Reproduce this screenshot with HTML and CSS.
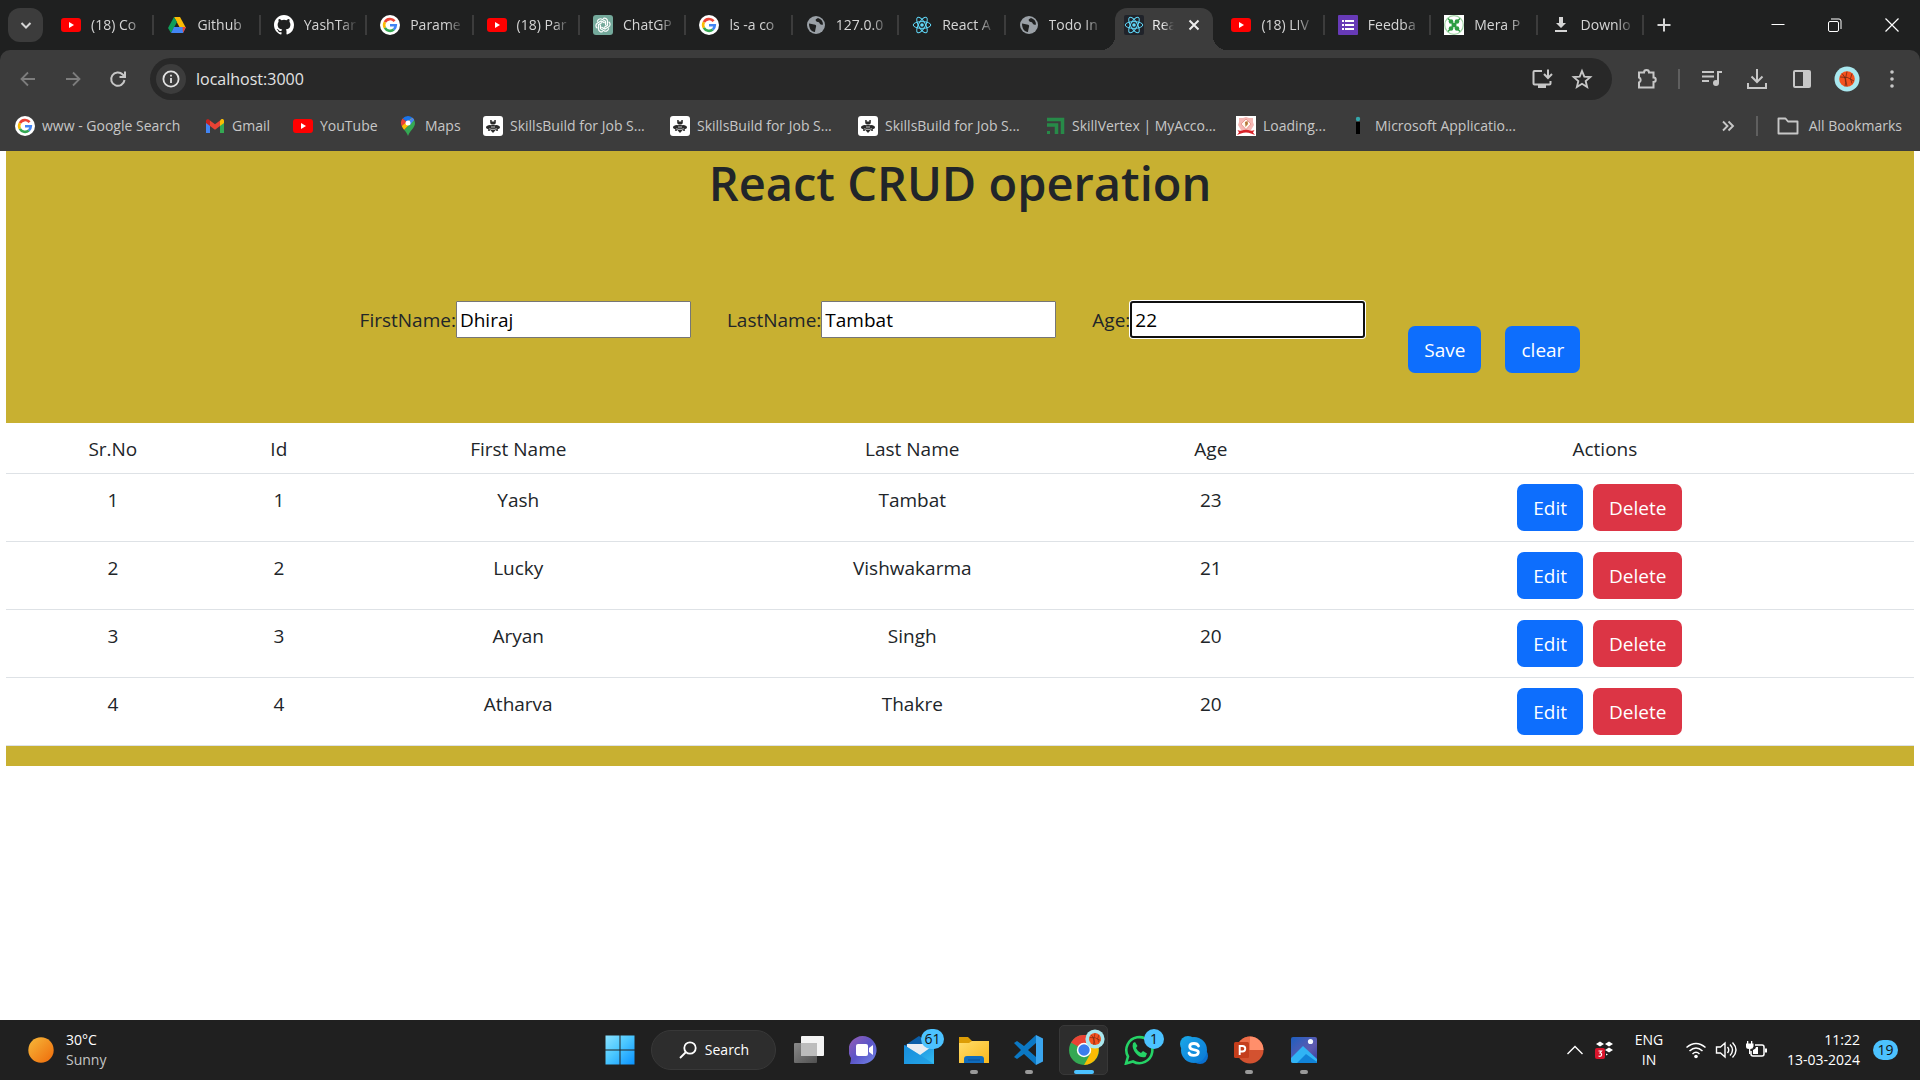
FILE: index.html
```html
<!DOCTYPE html>
<html lang="en">
<head>
<meta charset="utf-8">
<meta name="viewport" content="width=device-width, initial-scale=1">
<title>React App</title>
<link rel="stylesheet" href="styles.css">
</head>
<body>
<svg class="sprite" aria-hidden="true">
  <defs>
    <linearGradient id="g-win" x1="0" y1="0" x2="1" y2="1"><stop offset="0" stop-color="#8be2ff"/><stop offset=".45" stop-color="#4cc8ff"/><stop offset="1" stop-color="#0a93ff"/></linearGradient>
    <linearGradient id="g-sun" x1="0" y1="0" x2="1" y2="1"><stop offset="0" stop-color="#f6b93a"/><stop offset="1" stop-color="#ef6a0a"/></linearGradient>
    <linearGradient id="g-chat" x1="0" y1="0" x2="1" y2="1"><stop offset="0" stop-color="#9a5fb4"/><stop offset=".5" stop-color="#5b55c8"/><stop offset="1" stop-color="#7387e8"/></linearGradient>
    <linearGradient id="g-folder" x1="0" y1="0" x2="1" y2="1"><stop offset="0" stop-color="#ffdc6a"/><stop offset="1" stop-color="#f9b81c"/></linearGradient>
    <linearGradient id="g-skype" x1="0" y1="0" x2="1" y2="1"><stop offset="0" stop-color="#1ba5e8"/><stop offset="1" stop-color="#0a78d4"/></linearGradient>
    <linearGradient id="g-photo" x1="0" y1="0" x2="1" y2="1"><stop offset="0" stop-color="#1d5fc0"/><stop offset=".6" stop-color="#5f5ab0"/><stop offset="1" stop-color="#2d3fa0"/></linearGradient>
    <linearGradient id="g-mail" x1="0" y1="0" x2="1" y2="1"><stop offset="0" stop-color="#1384d8"/><stop offset="1" stop-color="#35bdf2"/></linearGradient>
    <linearGradient id="g-grey" x1="0" y1="0" x2="1" y2="1"><stop offset="0" stop-color="#8a8a8a"/><stop offset="1" stop-color="#505050"/></linearGradient>
  </defs>
  <symbol id="youtube" viewBox="0 0 20 20"><rect y="3" width="20" height="14" rx="3" fill="#f00"/><path d="M8 7l5 3-5 3z" fill="#fff"/></symbol>
  <symbol id="drive" viewBox="0 0 20 20"><path d="M7 2h6l6 11h-6z" fill="#fbbc04"/><path d="M7 2l3 5-6 11-3-5z" fill="#0f9d58"/><path d="M4 18l3-6h12l-3 6z" fill="#4285f4"/><path d="M15.500 12H19l-3 6z" fill="#ea4335"/></symbol>
  <symbol id="github" viewBox="0 0 16 16"><path fill="#fff" d="M8 0C3.580 0 0 3.580 0 8c0 3.540 2.290 6.530 5.470 7.590.4.070.55-.17.55-.38 0-.19-.01-.82-.01-1.490-2.010.37-2.530-.49-2.690-.94-.09-.23-.48-.94-.82-1.130-.28-.15-.68-.52-.01-.53.63-.01 1.080.58 1.230.82.72 1.210 1.870.87 2.330.66.070-.52.28-.87.51-1.070-1.780-.2-3.640-.89-3.640-3.950 0-.87.31-1.590.82-2.150-.08-.2-.36-1.020.08-2.120 0 0 .67-.21 2.200.82a7.600 7.600 0 014 0c1.530-1.040 2.200-.82 2.200-.82.44 1.100.16 1.920.08 2.120.51.56.82 1.270.82 2.150 0 3.070-1.870 3.750-3.650 3.950.29.25.54.73.54 1.480 0 1.070-.01 1.930-.01 2.200 0 .21.15.46.55.38A8 8 0 0016 8c0-4.420-3.580-8-8-8z"/></symbol>
  <symbol id="google" viewBox="0 0 20 20"><circle cx="10" cy="10" r="10" fill="#fff"/><g fill="none" stroke-width="2.600"><path d="M14.600 6.200A5.900 5.900 0 0 0 4.900 7.100" stroke="#ea4335"/><path d="M4.900 7.100a5.900 5.900 0 0 0 0 5.800" stroke="#fbbc05"/><path d="M4.900 12.900a5.900 5.900 0 0 0 8.900 1.600" stroke="#34a853"/><path d="M13.800 14.500a5.900 5.900 0 0 0 2-4.200H10" stroke="#4285f4"/></g></symbol>
  <symbol id="chatgpt" viewBox="0 0 20 20"><rect width="20" height="20" rx="3" fill="#74a99b"/><g fill="none" stroke="#fff" stroke-width="1.200"><g id="petal"><path d="M10 3.500c2-1 4.500.2 4.500 2.800v4L11 12.500"/></g><use href="#petal" transform="rotate(60 10 10)"/><use href="#petal" transform="rotate(120 10 10)"/><use href="#petal" transform="rotate(180 10 10)"/><use href="#petal" transform="rotate(240 10 10)"/><use href="#petal" transform="rotate(300 10 10)"/></g></symbol>
  <symbol id="globe" viewBox="0 0 20 20"><circle cx="10" cy="10" r="9" fill="#9aa0a6"/><path d="M3 8.500c2 0 3.500 1 5 1 2 0 2.500 1 2 2.500-.3 1-.6 2.500-1 5C5 17 3 13 3 8.500zM12 3c-2 1-3 1.500-2 3s3 .5 3.500 2 1.500 2 3.500 1.500C17 6 15 4 12 3z" fill="#1f2020"/></symbol>
  <symbol id="react" viewBox="0 0 20 20"><g fill="none" stroke="#61dafb" stroke-width="1"><ellipse cx="10" cy="10" rx="8.800" ry="3.400"/><ellipse cx="10" cy="10" rx="8.800" ry="3.400" transform="rotate(60 10 10)"/><ellipse cx="10" cy="10" rx="8.800" ry="3.400" transform="rotate(120 10 10)"/></g><circle cx="10" cy="10" r="1.800" fill="#61dafb"/></symbol>
  <symbol id="forms" viewBox="0 0 20 20"><rect width="20" height="20" rx="1" fill="#673ab7"/><path d="M4 5h2v2H4zM7 5h9v2H7zM4 9h2v2H4zM7 9h9v2H7zM4 13h2v2H4zM7 13h9v2H7z" fill="#fff"/></symbol>
  <symbol id="mera" viewBox="0 0 20 20"><path d="M0 0h20v20H0z" fill="#fff"/><circle cx="10" cy="10" r="9.300" fill="none" stroke="#9fd3a3" stroke-width="1.200"/><g fill="#2f9e44"><circle cx="7" cy="6.500" r="2.300"/><circle cx="13" cy="6.500" r="2.300"/><circle cx="7" cy="13.500" r="2.300"/><circle cx="13" cy="13.500" r="2.300"/><path d="M4 3.500l12 13M16 3.500l-12 13" stroke="#2f9e44" stroke-width="1.500"/><circle cx="10" cy="10" r="2.500"/></g></symbol>
  <symbol id="dl-tab" viewBox="0 0 20 20"><path d="M8 2h4v6h3l-5 5-5-5h3zM4 15h12v2H4z" fill="#d5d5d5"/></symbol>
  <symbol id="gmail" viewBox="0 0 20 20"><path d="M1 5v12h4V9z" fill="#4285f4"/><path d="M15 9v8h4V5z" fill="#34a853"/><path d="M15 4.500V10l4-3V5c0-2-2-2.500-3-1.500z" fill="#fbbc04"/><path d="M5 4.500V10l5 3.800 5-3.800V4.500l-5 3.800z" fill="#ea4335"/><path d="M1 5v2l4 3V4.500L4 3.600C3 2.800 1 3 1 5z" fill="#c5221f"/></symbol>
  <symbol id="maps" viewBox="0 0 20 20"><path d="M10 0a7 7 0 0 0-5.400 2.500L10 7l4.500-5.300A7 7 0 0 0 10 0z" fill="#1a73e8"/><path d="M4.600 2.500A7 7 0 0 0 3.700 10L10 7z" fill="#ea4335"/><path d="M14.500 1.700L3.700 10c.5 1.300 1.500 2.600 2.500 4L16 4z" fill="#fbbc04"/><path d="M16.200 4c1.500 3 .8 5.500-1 8-2.200 3-4 4.500-5.200 8-.8-2.500-2.300-4.200-3.800-6z" fill="#34a853"/><path d="M14.500 1.700c.8.600 1.400 1.400 1.700 2.300L12 9l-1-4z" fill="#4285f4"/><circle cx="10" cy="7" r="2.500" fill="#fff"/></symbol>
  <symbol id="bee" viewBox="0 0 20 20"><rect width="20" height="20" rx="3" fill="#fff"/><g fill="#2a2a2a"><path d="M7.200 4h1.500v1.500h2.600V4h1.500v2.500q0 2-2.800 2t-2.800-2z"/><ellipse cx="5.800" cy="11" rx="2.900" ry="1.700" transform="rotate(-15 5.800 11)"/><ellipse cx="14.200" cy="11" rx="2.900" ry="1.700" transform="rotate(15 14.200 11)"/><path d="M8.300 9h3.400l1 3v2L10 17l-2.700-3v-2z"/><circle cx="6" cy="14" r="1.100"/><circle cx="14" cy="14" r="1.100"/></g><path d="M8 11h4M7.800 13.300h4.400" stroke="#fff" stroke-width=".7"/></symbol>
  <symbol id="vertex" viewBox="0 0 20 20"><g fill="none" stroke="#278a48" stroke-width="3.500"><path d="M2 3.500h15.500V18"/><path d="M2 9h9.500v9"/></g><path d="M2 15h3v3H2z" fill="#278a48"/></symbol>
  <symbol id="seal" viewBox="0 0 20 20"><path d="M0 0h20v20H0z" fill="#fff"/><path d="M3 2h4l3-1 3 1h4v4l1 3-3 5H5L2 9l1-3z" fill="#f6b8b4"/><path d="M10 3l5 5-5 5.500L5 8z" fill="#fff6ee" stroke="#e58c86" stroke-width=".8"/><path d="M9 6l2.500-1 .5 3-2.500 3z" fill="#b5793a"/><path d="M1.500 14q2 1 4 .500 4.500-1.500 9 0 2 .5 4-.500L17 16.500l2 2.500-4-1.500q-5-2-10 0L1 19l2-2.500z" fill="#d8232a"/></symbol>
  <symbol id="info-i" viewBox="0 0 20 20"><circle cx="10" cy="3" r="2.200" fill="#35a7ac"/><path d="M8 6h4v12H8z" fill="#000"/></symbol>
  <symbol id="back" viewBox="0 0 20 20"><path d="M17 10H4M10 3.500L3.500 10l6.500 6.500" fill="none" stroke="currentColor" stroke-width="1.800"/></symbol>
  <symbol id="forward" viewBox="0 0 20 20"><path d="M3 10h13M10 3.500l6.500 6.500-6.500 6.500" fill="none" stroke="currentColor" stroke-width="1.800"/></symbol>
  <symbol id="reload" viewBox="0 0 20 20"><path d="M16.500 11a6.700 6.700 0 1 1-1.800-5.500l2 2M17 2.500V8h-5.500" fill="none" stroke="currentColor" stroke-width="2"/></symbol>
  <symbol id="info" viewBox="0 0 20 20"><circle cx="10" cy="10" r="7.600" fill="none" stroke="currentColor" stroke-width="1.800"/><path d="M9.100 5.800h1.800v1.800H9.100zM9.100 9h1.800v5H9.100z" fill="currentColor"/></symbol>
  <symbol id="install" viewBox="0 0 24 24"><path d="M12 4H4.500q-1 0-1 1v11.500q0 1 1 1h15q1 0 1-1V14M14 7l4 4 4-4M18 2.500V10" fill="none" stroke="currentColor" stroke-width="2"/><path d="M8 18h8v3H8z" fill="currentColor"/></symbol>
  <symbol id="star" viewBox="0 0 24 24"><path d="M12 4l2.300 5.600 6 .5-4.600 4 1.400 5.900-5.100-3.200L6.900 20l1.400-5.900-4.600-4 6-.5z" fill="none" stroke="currentColor" stroke-width="1.900"/></symbol>
  <symbol id="puzzle" viewBox="0 0 24 24"><path d="M4 5.500h5a2 2 0 0 1 5 0h4.500v5a2.200 2.200 0 0 1 0 4.500v5.500H4v-5a2.700 2.700 0 0 0 0-5z" fill="none" stroke="currentColor" stroke-width="2"/></symbol>
  <symbol id="music" viewBox="0 0 24 24"><path d="M2 5h12M2 9.500h12M2 14h7M22 5h-4v11" fill="none" stroke="currentColor" stroke-width="2"/><circle cx="16" cy="16" r="3" fill="currentColor"/></symbol>
  <symbol id="download" viewBox="0 0 24 24"><path d="M12 2v13M6.500 9.500L12 15l5.500-5.500M3 16v5h18v-5" fill="none" stroke="currentColor" stroke-width="2"/></symbol>
  <symbol id="panel" viewBox="0 0 24 24"><rect x="4" y="4" width="16" height="16" rx="1" fill="none" stroke="currentColor" stroke-width="2"/><path d="M13 4h7v16h-7z" fill="currentColor"/></symbol>
  <symbol id="ball" viewBox="0 0 26 26"><circle cx="13" cy="13" r="12.500" fill="#a9e8ef"/><circle cx="13" cy="13" r="7.800" fill="#f4511e"/><path d="M6 11q8-1 14 4M13 5.500q-3 7 0 15M8 7.500q5 5 3 13M18 7.500q-3 5 0 10" fill="none" stroke="#5d2412" stroke-width=".7"/></symbol>
  <symbol id="kebab" viewBox="0 0 24 24"><g fill="currentColor"><circle cx="12" cy="5" r="1.800"/><circle cx="12" cy="12" r="1.800"/><circle cx="12" cy="19" r="1.800"/></g></symbol>
  <symbol id="folder-line" viewBox="0 0 24 24"><path d="M2.500 4.500h7l2.500 3h9.500v12h-19z" fill="none" stroke="currentColor" stroke-width="1.900" stroke-linejoin="round"/></symbol>
  <symbol id="chevrons" viewBox="0 0 20 20"><path d="M5 5.500l4.500 4.500L5 14.500M10.500 5.500L15 10l-4.500 4.500" fill="none" stroke="currentColor" stroke-width="1.900"/></symbol>
  <symbol id="plus" viewBox="0 0 20 20"><path d="M10 3.500v13M3.500 10h13" stroke="currentColor" stroke-width="2"/></symbol>
  <symbol id="chev" viewBox="0 0 20 20"><path d="M5.500 8l4.500 4.500L14.500 8" fill="none" stroke="currentColor" stroke-width="2"/></symbol>
  <symbol id="cross" viewBox="0 0 20 20"><path d="M5.500 5.500l9 9M14.500 5.500l-9 9" stroke="currentColor" stroke-width="2"/></symbol>
  <symbol id="w-min" viewBox="0 0 20 20"><path d="M3.500 9.500h13" stroke="#fff" stroke-width="1"/></symbol>
  <symbol id="w-max" viewBox="0 0 20 20"><rect x="3.500" y="6.500" width="10" height="10" rx="1.500" fill="none" stroke="#fff"/><path d="M6 4h8q2 0 2 2v8" fill="none" stroke="#fff"/></symbol>
  <symbol id="w-close" viewBox="0 0 20 20"><path d="M3.500 3.500l13 13M16.500 3.500l-13 13" stroke="#fff" stroke-width="1.200"/></symbol>
  <symbol id="sun" viewBox="0 0 26 26"><circle cx="13" cy="13" r="12.700" fill="url(#g-sun)"/></symbol>
  <symbol id="windows" viewBox="0 0 30 30"><path d="M.5.500h14v14H.5zM15.500.500h14v14h-14zM.5 15.500h14v14H.5zM15.500 15.500h14v14h-14z" fill="url(#g-win)"/></symbol>
  <symbol id="search" viewBox="0 0 20 20"><circle cx="12" cy="8" r="5.700" fill="none" stroke="#fff" stroke-width="1.800"/><path d="M8 12l-6 6" stroke="#fff" stroke-width="1.800"/></symbol>
  <symbol id="taskview" viewBox="0 0 30 30"><rect x="7" y="1" width="23" height="20" rx="1" fill="#f3f3f3"/><rect y="8" width="23" height="20" rx="1" fill="url(#g-grey)"/><path d="M7 8h16v13H7z" fill="#bcbcbc"/></symbol>
  <symbol id="chat" viewBox="0 0 30 30"><path d="M1 29q1-3 1-6A14 14 0 1 1 15 29z" fill="url(#g-chat)"/><rect x="7" y="9" width="12" height="12" rx="2" fill="#fff"/><path d="M20 13l4-3v10l-4-3z" fill="#fff"/></symbol>
  <symbol id="mail" viewBox="0 0 30 30"><path d="M0 11L15 1l15 10v8H0z" fill="#0a5ea8"/><path d="M3 9h24v8L15 24 3 15z" fill="#e8edf2"/><path d="M0 10v19h30V10L16 20z" fill="url(#g-mail)"/><path d="M0 29V10l16 10 14 9z" fill="#1b95df" opacity=".6"/></symbol>
  <symbol id="explorer" viewBox="0 0 30 30"><path d="M0 2h9l4 4h17v8H0z" fill="#dc9c05"/><path d="M0 8h10l3-2h17v22H0z" fill="url(#g-folder)"/><path d="M5 28v-4q0-3 3-3h14q3 0 3 3v4z" fill="#0f6cbd"/><path d="M9 25h12" stroke="#0a4f94"/></symbol>
  <symbol id="vscode" viewBox="0 0 30 30"><path d="M22 0v30L10 19 3 24l-3-2 7-7-7-7 3-2 7 5z" fill="#0b78c4"/><path d="M22 8v14l-8-7z" fill="#202020"/><path d="M22 0l7 3.500v23L22 30z" fill="#3aa5ee"/></symbol>
  <symbol id="chrome" viewBox="0 0 30 30"><circle cx="15" cy="15" r="15" fill="#34a853"/><path d="M15 15L2 7.500A15 15 0 0 1 28 7.500z" fill="#ea4335"/><path d="M15 15V8h13a15 15 0 0 1-13 22l6.500-11.500z" fill="#fbbc04"/><circle cx="15" cy="15" r="7.200" fill="#fff"/><circle cx="15" cy="15" r="5.700" fill="#3b7ded"/></symbol>
  <symbol id="whatsapp" viewBox="0 0 30 30"><path d="M2 28.500l2-7a13 13 0 1 1 5 5z" fill="none" stroke="#25d366" stroke-width="2.600"/><path d="M9 8l2-1 2.500 4-1.500 2q1.500 3.500 5 5l2-2 4 2.500-1.500 3.500q-5 1.500-9.500-3.500T9 8z" fill="#25d366"/></symbol>
  <symbol id="skype" viewBox="0 0 30 30"><circle cx="9" cy="9" r="8" fill="#18a2e4"/><circle cx="21" cy="21" r="8" fill="#0a70d0"/><circle cx="15" cy="15" r="13" fill="url(#g-skype)"/><path d="M19.500 11q-1-2.500-4.500-2.500c-5.500 0-5.500 5-1 6s6 1.500 5 4-8 2.500-9-.500" fill="none" stroke="#fff" stroke-width="2.800" stroke-linecap="round"/></symbol>
  <symbol id="ppt" viewBox="0 0 30 30"><circle cx="16" cy="15" r="13.500" fill="#d35230"/><path d="M16 1.500A13.500 13.500 0 0 1 29.500 15H16z" fill="#ff8f6b"/><path d="M16 1.500V15H2.500A13.500 13.500 0 0 1 16 1.500z" fill="#ed6c47"/><rect y="7" width="15" height="16" rx="1.500" fill="#c43e1c"/><path d="M5.700 20v-9H8.500a2.600 2.600 0 0 1 0 5.500H5.700" fill="none" stroke="#fff" stroke-width="1.900"/></symbol>
  <symbol id="photos" viewBox="0 0 30 30"><rect x="2" y="2" width="26" height="26" rx="2" fill="url(#g-photo)"/><path d="M2 23L14 11l14 13v2q0 2-2 2H4q-2 0-2-2z" fill="#30b4f5"/><path d="M8 28l9-9 11 8v1z" fill="#1183d8"/><circle cx="21.500" cy="6.500" r="2.600" fill="#f4f8ff"/></symbol>
  <symbol id="caret" viewBox="0 0 20 20"><path d="M2.500 14L10 6.500l7.500 7.500" fill="none" stroke="#fff" stroke-width="1.400"/></symbol>
  <symbol id="dropbox" viewBox="0 0 24 24"><path d="M3 6l4-2.500L11 6 7 8.500zM12 6l4-2.500L20 6l-4 2.500zM12 12l4-2.500 4 2.500-4 2.500zM13 15.500l2 1-2 1z" fill="#fff"/><rect x="2" y="10" width="10" height="11" rx="2" fill="#d9142b"/><path d="M5.500 13H8.500L7 15q2 0 1.500 2T5.500 18" fill="none" stroke="#fff" stroke-width="1.200"/></symbol>
  <symbol id="wifi" viewBox="0 0 22 22"><g fill="none" stroke="#fff" stroke-width="1.500"><path d="M1.500 8.500q9.500-8 19 0M4.500 12q6.500-6 13 0M7.500 15q3.500-3.500 7 0"/></g><circle cx="11" cy="17.500" r="1.800" fill="#fff"/></symbol>
  <symbol id="speaker" viewBox="0 0 22 22"><g fill="none" stroke="#fff" stroke-width="1.400"><path d="M1.500 8v6h4l4.500 4V4L5.500 8zM12.500 8q2.500 3 0 6M15 5.500q5 5.500 0 11M17.500 3.500q7 7.500 0 15"/></g></symbol>
  <symbol id="battery" viewBox="0 0 22 22"><path d="M10 6h7q2 0 2 2v7q0 2-2 2H8q-2 0-2-2v-3" fill="none" stroke="#fff" stroke-width="1.500"/><path d="M8 15v-4q3-1 3-3h2v7zM20 9.500h2v4h-2zM2 2h1.300v3H2zM6 2h1.300v3H6zM1 4.500h7.500v3Q8 10 5.300 10v5H4v-5Q1 10 1 7.500z" fill="#fff"/></symbol>
</svg>

<header class="browser">
  <div class="tabstrip">
    <button class="tab-search" aria-label="Search tabs"><svg class="i20"><use href="#chev"/></svg></button>
    <nav class="tabs" aria-label="Tabs">
      <a class="tab" href="#"><svg class="i20"><use href="#youtube"/></svg><span>(18) Co</span></a>
      <a class="tab" href="#"><svg class="i20"><use href="#drive"/></svg><span>Github</span></a>
      <a class="tab" href="#"><svg class="i20"><use href="#github"/></svg><span>YashTar</span></a>
      <a class="tab" href="#"><svg class="i20"><use href="#google"/></svg><span>Parame</span></a>
      <a class="tab" href="#"><svg class="i20"><use href="#youtube"/></svg><span>(18) Par</span></a>
      <a class="tab" href="#"><svg class="i20"><use href="#chatgpt"/></svg><span>ChatGP</span></a>
      <a class="tab" href="#"><svg class="i20"><use href="#google"/></svg><span>ls -a co</span></a>
      <a class="tab" href="#"><svg class="i20"><use href="#globe"/></svg><span>127.0.0</span></a>
      <a class="tab" href="#"><svg class="i20"><use href="#react"/></svg><span>React A</span></a>
      <a class="tab last" href="#"><svg class="i20"><use href="#globe"/></svg><span>Todo In</span></a>
      <a class="tab active" href="#" aria-current="page"><svg class="i20 dark"><use href="#react"/></svg><span>Rea</span><svg class="i20"><use href="#cross"/></svg></a>
      <a class="tab" href="#"><svg class="i20"><use href="#youtube"/></svg><span>(18) LIV</span></a>
      <a class="tab" href="#"><svg class="i20"><use href="#forms"/></svg><span>Feedba</span></a>
      <a class="tab" href="#"><svg class="i20"><use href="#mera"/></svg><span>Mera P</span></a>
      <a class="tab" href="#"><svg class="i20"><use href="#dl-tab"/></svg><span>Downlo</span></a>
    </nav>
    <button class="new-tab" aria-label="New tab"><svg class="i20"><use href="#plus"/></svg></button>
    <div class="window-controls">
      <button aria-label="Minimize"><svg class="i20"><use href="#w-min"/></svg></button>
      <button aria-label="Restore"><svg class="i20"><use href="#w-max"/></svg></button>
      <button aria-label="Close"><svg class="i20"><use href="#w-close"/></svg></button>
    </div>
  </div>
  <div class="toolbar">
    <button class="tool dim" aria-label="Back"><svg class="i20"><use href="#back"/></svg></button>
    <button class="tool dim" aria-label="Forward"><svg class="i20"><use href="#forward"/></svg></button>
    <button class="tool" aria-label="Reload"><svg class="i20"><use href="#reload"/></svg></button>
    <div class="omnibox">
      <button class="site-info" aria-label="Site information"><svg class="i20"><use href="#info"/></svg></button>
      <input class="url" type="text" value="localhost:3000" aria-label="Address">
      <button class="omni-btn" aria-label="Install app"><svg class="i24"><use href="#install"/></svg></button>
      <button class="omni-btn" aria-label="Bookmark"><svg class="i24"><use href="#star"/></svg></button>
    </div>
    <button class="tool" aria-label="Extensions"><svg class="i24"><use href="#puzzle"/></svg></button>
    <span class="divider"></span>
    <button class="tool" aria-label="Media"><svg class="i24"><use href="#music"/></svg></button>
    <button class="tool" aria-label="Downloads"><svg class="i24"><use href="#download"/></svg></button>
    <button class="tool" aria-label="Side panel"><svg class="i24"><use href="#panel"/></svg></button>
    <button class="tool" aria-label="Profile"><svg class="i26"><use href="#ball"/></svg></button>
    <button class="tool" aria-label="Menu"><svg class="i24"><use href="#kebab"/></svg></button>
  </div>
  <div class="bookmarks">
    <nav class="bookmark-list" aria-label="Bookmarks">
      <a href="#"><svg class="i20"><use href="#google"/></svg>www - Google Search</a>
      <a href="#"><svg class="i20"><use href="#gmail"/></svg>Gmail</a>
      <a href="#"><svg class="i20"><use href="#youtube"/></svg>YouTube</a>
      <a href="#"><svg class="i20"><use href="#maps"/></svg>Maps</a>
      <a href="#"><svg class="i20"><use href="#bee"/></svg>SkillsBuild for Job S...</a>
      <a href="#"><svg class="i20"><use href="#bee"/></svg>SkillsBuild for Job S...</a>
      <a href="#"><svg class="i20"><use href="#bee"/></svg>SkillsBuild for Job S...</a>
      <a href="#"><svg class="i20"><use href="#vertex"/></svg>SkillVertex | MyAcco...</a>
      <a href="#"><svg class="i20"><use href="#seal"/></svg>Loading...</a>
      <a href="#"><svg class="i20"><use href="#info-i"/></svg>Microsoft Applicatio...</a>
    </nav>
    <button class="more" aria-label="More bookmarks"><svg class="i20"><use href="#chevrons"/></svg></button>
    <span class="divider"></span>
    <a class="all-bookmarks" href="#"><svg class="i24"><use href="#folder-line"/></svg>All Bookmarks</a>
  </div>
</header>

<main class="page">
  <div class="app">
    <h1>React CRUD operation</h1>
    <form class="student-form">
      <div class="field"><label for="first">FirstName:</label><input id="first" type="text" value="Dhiraj"></div>
      <div class="field"><label for="last">LastName:</label><input id="last" type="text" value="Tambat"></div>
      <div class="field"><label for="age">Age:</label><input id="age" class="focused" type="text" value="22"></div>
      <div class="form-actions">
        <button class="btn primary" type="button">Save</button>
        <button class="btn primary" type="button">clear</button>
      </div>
    </form>
    <table class="students">
      <colgroup><col class="c-sr"><col class="c-id"><col class="c-first"><col class="c-last"><col class="c-age"><col class="c-act"></colgroup>
      <thead><tr><th>Sr.No</th><th>Id</th><th>First Name</th><th>Last Name</th><th>Age</th><th>Actions</th></tr></thead>
      <tbody>
        <tr><td>1</td><td>1</td><td>Yash</td><td>Tambat</td><td>23</td><td><div class="row-actions"><button class="btn primary">Edit</button><button class="btn danger">Delete</button></div></td></tr>
        <tr><td>2</td><td>2</td><td>Lucky</td><td>Vishwakarma</td><td>21</td><td><div class="row-actions"><button class="btn primary">Edit</button><button class="btn danger">Delete</button></div></td></tr>
        <tr><td>3</td><td>3</td><td>Aryan</td><td>Singh</td><td>20</td><td><div class="row-actions"><button class="btn primary">Edit</button><button class="btn danger">Delete</button></div></td></tr>
        <tr><td>4</td><td>4</td><td>Atharva</td><td>Thakre</td><td>20</td><td><div class="row-actions"><button class="btn primary">Edit</button><button class="btn danger">Delete</button></div></td></tr>
      </tbody>
    </table>
  </div>
</main>

<footer class="taskbar">
  <div class="weather"><svg class="i26"><use href="#sun"/></svg><div><div>30°C</div><div class="muted">Sunny</div></div></div>
  <div class="apps">
    <button class="app-btn" aria-label="Start"><svg class="i30"><use href="#windows"/></svg></button>
    <button class="search-pill"><svg class="i20"><use href="#search"/></svg>Search</button>
    <button class="app-btn" aria-label="Task view"><svg class="i30"><use href="#taskview"/></svg></button>
    <button class="app-btn" aria-label="Chat"><svg class="i30"><use href="#chat"/></svg></button>
    <button class="app-btn" aria-label="Mail"><svg class="i30"><use href="#mail"/></svg><span class="badge wide">61</span></button>
    <button class="app-btn running" aria-label="File Explorer"><svg class="i30"><use href="#explorer"/></svg></button>
    <button class="app-btn running" aria-label="Visual Studio Code"><svg class="i30"><use href="#vscode"/></svg></button>
    <button class="app-btn running current" aria-label="Chrome"><svg class="i30"><use href="#chrome"/></svg><svg class="badge-icon"><use href="#ball"/></svg></button>
    <button class="app-btn" aria-label="WhatsApp"><svg class="i30"><use href="#whatsapp"/></svg><span class="badge">1</span></button>
    <button class="app-btn" aria-label="Skype"><svg class="i30"><use href="#skype"/></svg></button>
    <button class="app-btn running" aria-label="PowerPoint"><svg class="i30"><use href="#ppt"/></svg></button>
    <button class="app-btn running" aria-label="Photos"><svg class="i30"><use href="#photos"/></svg></button>
  </div>
  <div class="tray">
    <svg class="i20"><use href="#caret"/></svg>
    <svg class="i24"><use href="#dropbox"/></svg>
    <div class="lang"><div>ENG</div><div>IN</div></div>
    <div class="status"><svg class="i22"><use href="#wifi"/></svg><svg class="i22"><use href="#speaker"/></svg><svg class="i22"><use href="#battery"/></svg></div>
    <div class="clock"><div>11:22</div><div>13-03-2024</div></div>
    <span class="count">19</span>
  </div>
</footer>
</body>
</html>
```
FILE: styles.css
```css
* { box-sizing: border-box; }

body {
  margin: 0;
  min-height: 100vh;
  display: flex;
  flex-direction: column;
  background: #fff;
  color: #212529;
  font-family: "Open Sans", "Noto Sans", sans-serif;
  font-size: 19px;
  line-height: 30px;
}

button, input { font: inherit; color: inherit; }
button { border: 0; padding: 0; background: none; display: flex; align-items: center; justify-content: center; }
a { color: inherit; text-decoration: none; }
svg { flex: none; display: block; }
.sprite { position: absolute; width: 0; height: 0; }
.i20 { width: 20px; height: 20px; }
.i22 { width: 22px; height: 22px; }
.i24 { width: 24px; height: 24px; }
.i26 { width: 26px; height: 26px; }
.i30 { width: 30px; height: 30px; }

/* Browser window */
.browser { background: #1f2020; color: #d5d5d5; font-size: 14px; line-height: 20px; }

.tabstrip { display: flex; align-items: center; height: 50px; padding-left: 8px; }
.tab-search { width: 35px; height: 34px; margin-right: 5px; border-radius: 12px; background: #3c3c3c; }
.tabs { display: grid; grid-auto-flow: column; grid-auto-columns: minmax(0, 1fr); align-self: stretch; flex: 0 1 1596px; min-width: 0; }
.tab { position: relative; display: flex; align-items: center; gap: 10px; min-width: 0; padding: 0 8px 0 13px; }
.tab::after { content: ""; position: absolute; right: 0; top: 15px; width: 2px; height: 20px; background: #3c3c3c; }
.tab span { flex: 1; min-width: 0; overflow: hidden; white-space: nowrap; mask-image: linear-gradient(90deg, #000 36px, transparent 54px); }
.tab.active { margin: 8px 5px 0 3px; padding: 0 9px 8px; gap: 8px; border-radius: 12px 12px 0 0; background: #3c3c3c; color: #eee; }
.tab.active span { mask-image: linear-gradient(90deg, #000 10px, transparent 22px); }
.tab.active::before, .tab.active::after {
  content: ""; position: absolute; top: auto; bottom: 0; width: 14px; height: 14px;
  background: radial-gradient(circle at 0 0, transparent 14px, #3c3c3c 14px);
}
.tab.active::before { left: -14px; }
.tab.active::after { right: -14px; background: radial-gradient(circle at 100% 0, transparent 14px, #3c3c3c 14px); }
.tab.last::after { display: none; }
.dark { background: #20232a; border-radius: 2px; }
.new-tab { width: 40px; height: 40px; }
.window-controls { display: flex; align-self: stretch; margin-left: auto; }
.window-controls button { width: 57px; }

.toolbar { display: flex; align-items: center; height: 58px; padding: 0 6px 0 5px; background: #3c3c3c; border-radius: 10px 10px 0 0; color: #c7c7c7; }
.tool { width: 45px; height: 42px; }
.dim { color: #7d7d7d; }
.omnibox { flex: 1; display: flex; align-items: center; height: 42px; margin: 0 12px 0 10px; padding: 0 10px 0 6px; border-radius: 21px; background: #282828; }
.site-info { width: 30px; height: 30px; border-radius: 50%; background: #3c3c3c; color: #e3e3e3; }
.url { flex: 1; min-width: 0; padding: 0 10px; border: 0; background: none; color: #e3e3e3; font-size: 16px; outline: 0; }
.omni-btn { width: 40px; height: 40px; }
.divider { width: 2px; height: 20px; margin: 0 9px; background: #5f5f5f; }

.bookmarks { display: flex; align-items: center; height: 43px; padding: 0 18px 8px 15px; background: #3c3c3c; color: #c7c7c7; }
.bookmark-list { flex: 1; display: grid; grid-template-columns: 190px 88px 105px 85px 187px 188px 187px 191px 112px 1fr; min-width: 0; overflow: hidden; }
.bookmark-list a, .all-bookmarks { display: flex; align-items: center; gap: 7px; white-space: nowrap; }
.all-bookmarks { gap: 9px; }
.more { width: 36px; height: 30px; }
.bookmarks .divider { margin: 0 18px 0 10px; }

/* Page */
.page { flex: 1; padding: 0 6px; }
.app { padding-bottom: 20px; background: #c8b031; }
h1 { margin: 0; font-size: 47px; line-height: 64px; font-weight: 600; text-align: center; }
.student-form { display: flex; justify-content: center; padding: 86px 0 50px 20px; }
.field { display: flex; align-items: center; height: 37px; margin-right: 36px; }
.field input { width: 235px; height: 37px; padding: 0 3px; border: 1px solid #767676; border-radius: 1px; background: #fff; color: #000; outline: 0; }
.field .focused { border: 2px solid #101010; border-radius: 3px; box-shadow: 0 0 0 1px #fff; }
.form-actions { display: flex; gap: 24px; margin: 25px 0 0 7px; }
.btn { height: 47px; padding: 1px 16px 0; border-radius: 7px; color: #fff; font-size: 19px; font-weight: 500; }
.primary { background: #0d6efd; }
.danger { background: #dc3545; }

.students { width: 100%; table-layout: fixed; border-collapse: separate; border-spacing: 0; background: #fff; text-align: center; }
.students th, .students td { padding: 11px 10px 9px; border-bottom: 1px solid #dee2e6; font-weight: 400; vertical-align: top; }
.students td:last-child { padding: 10px; }
.c-sr { width: 11.2%; }
.c-id { width: 6.2%; }
.c-first { width: 18.9%; }
.c-last { width: 22.4%; }
.c-age { width: 8.9%; }
.c-act { width: 32.4%; }
.row-actions { display: flex; justify-content: center; gap: 10px; padding-right: 10px; }

/* Taskbar */
.taskbar { display: grid; grid-template-columns: 1fr auto 1fr; align-items: center; height: 60px; background: #202020; color: #fff; font-size: 14px; line-height: 20px; }
.weather { display: flex; align-items: center; gap: 12px; padding-left: 28px; }
.muted { color: #c5c5c5; }
.apps { display: flex; align-items: center; padding-left: 3px; }
.app-btn { position: relative; width: 55px; height: 60px; }
.search-pill { gap: 7px; width: 125px; height: 40px; margin: 0 5px 0 4px; border: 1px solid #383838; border-radius: 20px; background: #2d2d2d; }
.running::after { content: ""; position: absolute; left: 50%; bottom: 6px; width: 8px; height: 4px; margin-left: -4px; border-radius: 2px; background: #9a9a9a; }
.current::before { content: ""; position: absolute; inset: 5px 3px; border: 1px solid #383838; border-radius: 5px; background: #2d2d2d; }
.current svg { position: relative; }
.current::after { width: 20px; margin-left: -10px; background: #4cc2ff; }
.badge { position: absolute; top: 9px; right: 2px; min-width: 20px; height: 20px; border-radius: 10px; background: #4cc2ff; color: #111; }
.badge.wide { min-width: 23px; }
.current .badge-icon { position: absolute; top: 9px; right: 6px; width: 20px; height: 20px; }
.tray { display: flex; align-items: center; justify-content: flex-end; padding-right: 22px; text-align: right; }
.tray > .i24 { margin-left: 8px; }
.lang { width: 64px; text-align: center; }
.status { display: flex; gap: 8px; margin-left: 4px; }
.clock { width: 93px; white-space: nowrap; }
.count { width: 25px; height: 20px; margin-left: 13px; border-radius: 10px; background: #4cc2ff; color: #111; text-align: center; }
```
